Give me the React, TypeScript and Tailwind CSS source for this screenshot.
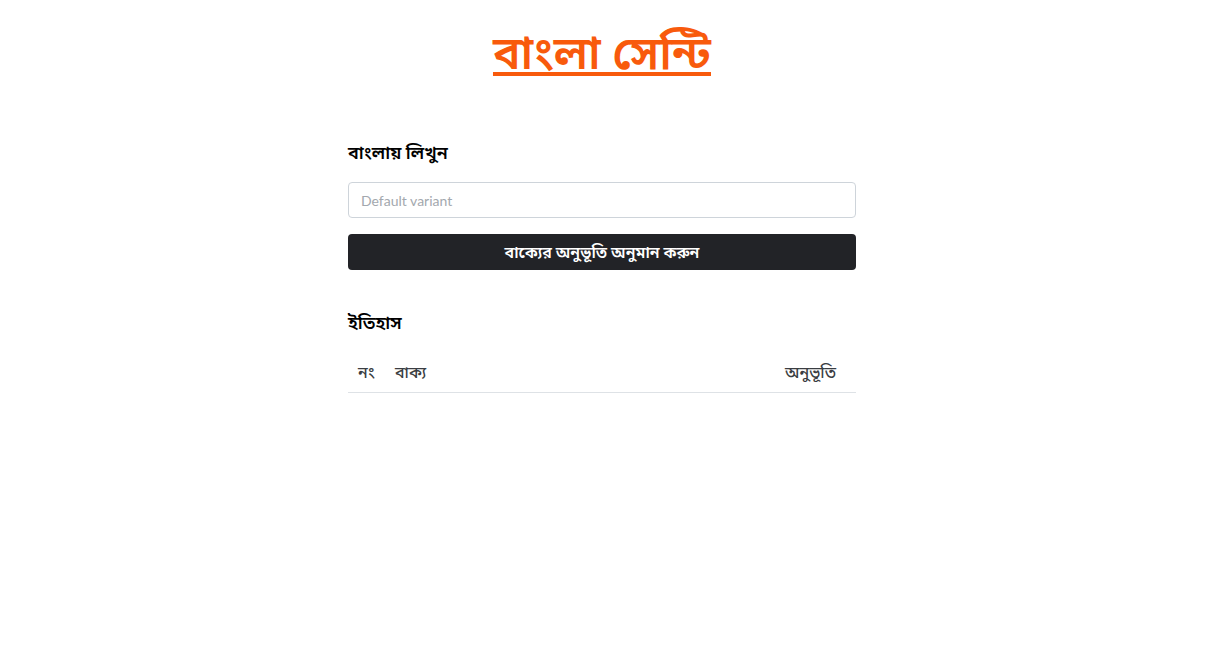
export default function App() {
  return (
    <div
      className="w-[1204px] min-h-[652px] bg-white text-[#212529]"
      style={{ fontFamily: '"Lato", "Noto Sans Bengali", "Noto Sans", sans-serif' }}
    >
      <div className="pt-[22px] text-center">
        <a href="#" className="text-[46px] font-semibold leading-[60px] text-[#f85a0c] underline">
          বাংলা সেন্টি
        </a>
      </div>

      <div className="mx-auto mt-[58px] w-[508px]">
        <h2 className="text-[18px] font-semibold leading-[24px] text-black">বাংলায় লিখুন</h2>

        <input
          type="text"
          placeholder="Default variant"
          className="mt-[18px] block h-[36px] w-full rounded-[4px] border border-[#ced4da] px-[12px] text-[14px] placeholder:text-[#a3a8ae] outline-none"
        />

        <button className="mt-[16px] block h-[36px] w-full rounded-[4px] bg-[#222327] text-[16px] font-semibold text-white">
          বাক্যের অনুভূতি অনুমান করুন
        </button>

        <h2 className="mt-[40px] text-[18px] font-semibold leading-[24px] text-black">ইতিহাস</h2>

        <table className="mt-[16px] w-full text-[16px] text-[#3a3d42]">
          <thead>
            <tr className="border-b border-[#dee2e6]">
              <th className="w-[47px] pt-[10px] pb-[8px] pl-[10px] text-left font-medium">নং</th>
              <th className="pt-[10px] pb-[8px] text-left font-medium">বাক্য</th>
              <th className="pt-[10px] pb-[8px] pr-[20px] text-right font-medium">অনুভূতি</th>
            </tr>
          </thead>
          <tbody />
        </table>
      </div>
    </div>
  );
}
